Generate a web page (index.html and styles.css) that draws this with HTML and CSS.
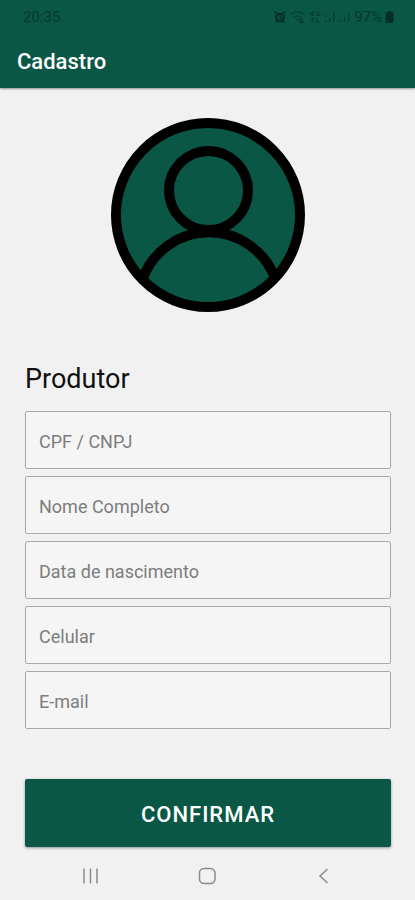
FILE: index.html
```html
<!DOCTYPE html>
<html lang="pt-BR">
<head>
    <meta charset="UTF-8">
    <meta name="viewport" content="width=device-width, initial-scale=1.0">
    <title>Cadastro</title>
    <link rel="stylesheet" href="styles.css">
</head>
<body>
    <header class="app-header">
        <div class="status-bar">
            <span class="clock">20:35</span>
            <div class="status-icons">
                <svg width="14" height="14" viewBox="0 0 14 14">
                    <circle cx="7" cy="7.5" r="3.8" fill="none" stroke="currentColor" stroke-width="2.6"/>
                    <path d="M1.5 3.5l2.5-2M12.5 3.5l-2.5-2M3 12.5l1-1.5M11 12.5l-1-1.5M7 5.5v2.5h2" fill="none" stroke="currentColor" stroke-width="1.6"/>
                </svg>
                <svg class="faint" width="16" height="14" viewBox="0 0 16 14" fill="none" stroke="currentColor" stroke-width="1.5">
                    <path d="M1 4.5c4-3.5 9-3.5 13 0M3.5 7.5c2.5-2 5.5-2 8 0M6 10c1-.8 2-.8 3 0M11.5 8v5M9.5 11l2 2 2-2"/>
                </svg>
                <svg class="faint" width="12" height="14" viewBox="0 0 12 14" fill="none" stroke="currentColor" stroke-width="1.2">
                    <path d="M4 1L1.5 4.5h3.5M4 1v5M10.5 2H8v3.5h2.5V4M4 8v5M2 10l2-2M8 8v5M8 13l2-2"/>
                </svg>
                <svg class="faint" width="12" height="14" viewBox="0 0 12 14" fill="currentColor">
                    <path d="M1 5h1.5v2H1zM1 10h1.5v2H1zM5 8h1.5v4H5zM9 2h1.5v10H9z"/>
                </svg>
                <svg class="faint" width="12" height="14" viewBox="0 0 12 14" fill="currentColor">
                    <path d="M1 10h1.5v2H1zM5 7h1.5v5H5zM9 3h1.5v9H9z"/>
                </svg>
                <span class="battery-level">97%</span>
                <svg width="9" height="14" viewBox="0 0 9 14" fill="currentColor">
                    <path d="M3 1h3v1h1.5l1 1v9l-1 1h-6l-1-1V3l1-1H3z"/>
                </svg>
            </div>
        </div>
        <h1 class="app-title">Cadastro</h1>
    </header>

    <main class="content">
        <svg class="avatar" viewBox="0 0 194 194" role="img" aria-label="Foto do produtor">
            <circle class="disc" cx="97" cy="97" r="92"/>
            <circle cx="97.5" cy="72.5" r="39.5"/>
            <path d="M32 160A70.5 70.5 0 0 1 164 160"/>
        </svg>

        <form class="signup">
            <h2 class="section-title">Produtor</h2>
            <div class="fields">
                <input type="text" placeholder="CPF / CNPJ" aria-label="CPF / CNPJ">
                <input type="text" placeholder="Nome Completo" aria-label="Nome Completo">
                <input type="text" placeholder="Data de nascimento" aria-label="Data de nascimento">
                <input type="tel" placeholder="Celular" aria-label="Celular">
                <input type="email" placeholder="E-mail" aria-label="E-mail">
            </div>
            <button class="confirm" type="submit">CONFIRMAR</button>
        </form>
    </main>

    <nav class="system-nav">
        <button type="button" aria-label="Recentes">
            <svg width="20" height="20" viewBox="0 0 20 20"><path d="M3 2.5v15M9.5 2.5v15M16 2.5v15"/></svg>
        </button>
        <button type="button" aria-label="Início">
            <svg width="20" height="20" viewBox="0 0 20 20"><rect x="1.5" y="2.5" width="15.5" height="15" rx="4.5"/></svg>
        </button>
        <button type="button" aria-label="Voltar">
            <svg width="20" height="20" viewBox="0 0 20 20"><path d="M12.5 3L5 10l7.5 7"/></svg>
        </button>
    </nav>
</body>
</html>
```

FILE: styles.css
```css
* {
    box-sizing: border-box;
}

body {
    margin: 0;
    min-height: 100vh;
    display: flex;
    flex-direction: column;
    background: #f1f1f1;
    font-family: Roboto, sans-serif;
    color: #111111;
}

/* Header */
.app-header {
    background: #0a5745;
    box-shadow: 0 1px 2px rgba(0, 0, 0, 0.4);
}

.status-bar {
    display: flex;
    justify-content: space-between;
    align-items: center;
    height: 34px;
    padding: 0 21px 0 23px;
    color: #06302a;
    font-size: 15px;
}

.clock,
.battery-level {
    color: #07392f;
}

.status-icons {
    display: flex;
    align-items: center;
    gap: 3px;
}

.faint {
    opacity: 0.6;
}

.app-title {
    margin: 0;
    padding: 16px 17px 14px;
    color: #ffffff;
    font-size: 22px;
    font-weight: 500;
    line-height: 24px;
}

/* Content */
.content {
    flex: 1;
    display: flex;
    flex-direction: column;
    padding: 30px 24px 0 25px;
}

.avatar {
    align-self: center;
    width: 194px;
    height: 194px;
    fill: none;
    stroke: #000000;
    stroke-width: 10;
}

.avatar .disc {
    fill: #0a5745;
}

.signup {
    display: flex;
    flex-direction: column;
}

.section-title {
    margin: 50px 0 15px;
    font-size: 27px;
    font-weight: 400;
    line-height: 34px;
}

.fields {
    display: grid;
    gap: 7px;
}

.fields input {
    width: 100%;
    height: 58px;
    padding: 2px 13px 0;
    border: 1px solid #a9a9a9;
    border-radius: 2px;
    background: #f5f5f5;
    color: #111111;
    font-family: inherit;
    font-size: 18px;
}

.fields input::placeholder {
    color: #7d7d7d;
    opacity: 1;
}

.confirm {
    height: 68px;
    margin-top: 50px;
    padding: 2px 0 0;
    border: 0;
    border-radius: 2px;
    background: #0a5745;
    box-shadow: 0 1px 3px rgba(0, 0, 0, 0.4);
    color: #ffffff;
    font-family: inherit;
    font-size: 22px;
    font-weight: 500;
    letter-spacing: 1px;
}

/* System navigation */
.system-nav {
    display: flex;
    justify-content: space-around;
    padding: 14px 32px;
}

.system-nav button {
    display: flex;
    padding: 0;
    border: 0;
    background: none;
}

.system-nav svg {
    fill: none;
    stroke: #8a8a8a;
    stroke-width: 1.5;
}
```
